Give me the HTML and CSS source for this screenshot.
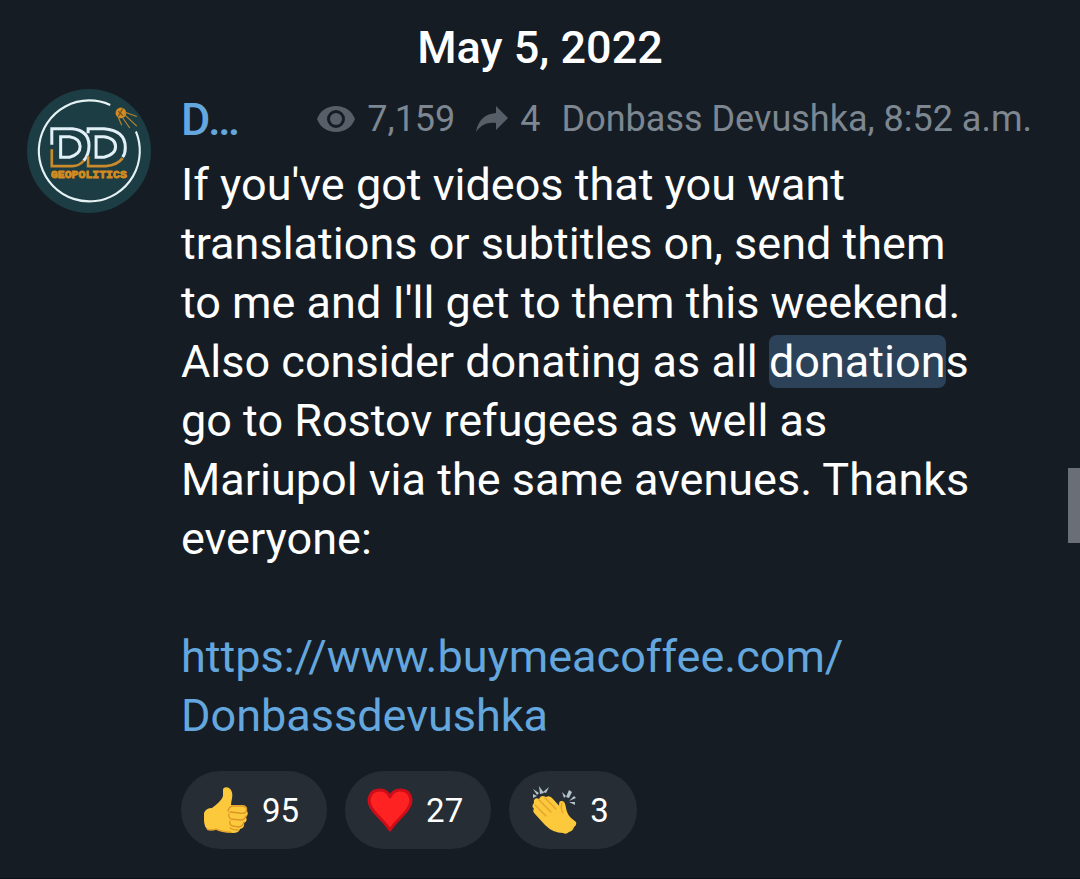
FILE: index.html
```html
<!DOCTYPE html>
<html lang="en">
<head>
    <meta charset="UTF-8">
    <meta name="viewport" content="width=device-width, initial-scale=1.0">
    <title>Donbass Devushka</title>
    <link rel="stylesheet" href="styles.css">
</head>
<body>
<main class="chat">
    <h2 class="date">May 5, 2022</h2>

    <article class="message">
        <svg class="avatar" viewBox="0 0 140 140" role="img" aria-label="DD Geopolitics">
            <circle cx="70" cy="70" r="70" fill="#1b3d43"/>
            <path d="M94 18A57 57 0 1 0 123 48" fill="none" stroke="#e6f1f4" stroke-width="2.4"/>
            <!-- letters frame -->
            <g fill="none" stroke="#e2f0f8" stroke-width="3.4">
                <path d="M28 63V45H51Q70 47 70 64Q70 74 64 81"/>
                <path d="M38 54H48Q60 56 60 65T48 77H38Z"/>
                <path d="M69 50V45H87Q111 47 111 66Q111 73 108 77"/>
                <path d="M78 54H87Q100 56 100 65T87 77H78Z"/>
            </g>
            <path d="M28 68V87H51Q59 87 64 81M69 76V87H89Q102 86 108 78" fill="none" stroke="#c98b2b" stroke-width="3"/>
            <text class="avatar-text" x="27" y="101">GEOPOLITICS</text>
            <!-- satellite -->
            <circle cx="106" cy="27" r="6" fill="#d58b20"/>
            <path d="M103 25L108 30M108 22L103 31" stroke="#6f5528" stroke-width="1.5"/>
            <path d="M110 26L124 31M110 29L124 42M107 31L116 44M103 32L107 41" stroke="#b8862f" stroke-width="1.3"/>
        </svg>

        <div class="content">
            <header class="info">
                <a class="author" href="#">D…</a>
                <div class="meta">
                    <span class="stat">
                        <svg class="icon-eye" viewBox="0 0 38 26" aria-hidden="true">
                            <path fill-rule="evenodd" d="M19 0C10 0 3 5 0 13C3 21 10 26 19 26S35 21 38 13C35 5 28 0 19 0ZM19 4A9 9 0 1 1 19 22A9 9 0 1 1 19 4Z"/>
                            <circle cx="19" cy="13" r="6"/>
                        </svg>
                        7,159
                    </span>
                    <span class="stat">
                        <svg class="icon-share" viewBox="0 0 32 26" aria-hidden="true">
                            <path d="M20 0L32 12L20 24V17C11 16 5 19 0 26C2 15 8 8 20 7Z"/>
                        </svg>
                        4
                    </span>
                    <span class="signature">Donbass Devushka, 8:52 a.m.</span>
                </div>
            </header>

            <p class="text">If you've got videos that you want translations or subtitles on, send them to me and I'll get to them this weekend. Also consider donating as all <mark>donation</mark>s go to Rostov refugees as well as Mariupol via the same avenues. Thanks everyone:</p>
            <p class="text"><a href="https://www.buymeacoffee.com/Donbassdevushka">https://www.buymeacoffee.com/<wbr>Donbassdevushka</a></p>

            <div class="reactions">
                <button class="reaction" type="button" aria-label="Thumbs up 95">
                    <svg class="emoji" viewBox="0 0 46 48" aria-hidden="true">
                        <path fill="#fdc93c" d="M20 4C20 1 25 0 28 4C31 9 28 15 28 19H40Q45 20 44 25Q46 28 43 31Q45 35 41 37Q42 42 37 43Q36 47 30 47L17 45L12 43L5 44Q1 41 1 34V27Q3 22 9 22C13 19 19 14 20 10Z"/>
                        <path fill="none" stroke="#dc9628" stroke-width="1.3" stroke-linecap="round" d="M25 25Q26 20 31 20H40Q45 21 43 26Q41 28 36 27L27 26M26 28Q25 31 28 33L37 34Q42 34 43 30M27 35Q26 38 29 40L36 41Q40 40 41 36M27 42Q30 44 35 44"/>
                        <path fill="none" stroke="#e9a82c" stroke-width="1.6" d="M4 43Q8 45 13 43Q19 46 28 46"/>
                    </svg>
                    95
                </button>
                <button class="reaction" type="button" aria-label="Heart 27">
                    <svg class="emoji" viewBox="0 0 46 48" aria-hidden="true">
                        <path fill="#ff2222" stroke="#cf0d19" stroke-width="3" stroke-linejoin="round" d="M23 44Q19 38 11 30Q2 21 2 14Q3 4 13 4Q20 4 23 11Q26 4 33 4Q43 4 44 14Q44 21 35 30Q27 38 23 44Z"/>
                    </svg>
                    27
                </button>
                <button class="reaction" type="button" aria-label="Clapping hands 3">
                    <svg class="emoji" viewBox="0 0 46 48" aria-hidden="true">
                        <path fill="#b3c3cc" d="M2 3L8 7L6 9ZM8 0L13 7L9 8ZM18 1L15 7L12 6ZM2 8L6 10L2 12ZM31 6L35 10L33 12ZM38 4L41 6L38 12L35 11ZM43 10L45 12L38 15ZM38 16L44 16L44 19Z"/>
                        <path fill="#f0a725" d="M28 26Q26 19 30 15Q34 15 34 21L36 29L43 35L38 41L26 34Z"/>
                        <path fill="#fdc93c" d="M3 17C2 13 5 11 8 13Q10 8 15 11Q19 9 22 13L30 22Q26 15 31 15Q34 15 35 22Q36 28 40 32L45 36Q46 39 43 41Q42 45 38 46Q35 49 32 47Q22 47 14 39L4 28Q1 25 3 23Q0 20 3 17Z"/>
                        <path fill="none" stroke="#e3a02c" stroke-width="1.2" stroke-linecap="round" d="M8 14L20 26M14 12L25 23M4 19L15 30M31 17Q29 22 32 27"/>
                    </svg>
                    3
                </button>
            </div>
        </div>
    </article>
    <div class="scroll-thumb"></div>
</main>
</body>
</html>
```

FILE: styles.css
```css
* {
    box-sizing: border-box;
}
body {
    margin: 0;
    background-color: #151c24;
    color: #fff;
    font-family: Roboto, sans-serif;
    font-size: 45px;
    line-height: 59px;
}
a {
    color: #64a7de;
    text-decoration: none;
}
.chat {
    position: relative;
    padding: 18px 48px 29px 27px;
    border-bottom: 1px solid #0c1118;
}
.date {
    /* center on the whole window, the side paddings differ */
    margin: 0 0 11px 21px;
    font-size: 45px;
    font-weight: 500;
    line-height: 60px;
    text-align: center;
}
.message {
    display: flex;
    align-items: flex-start;
    gap: 30px;
}
.avatar {
    flex: none;
    width: 124px;
    height: 124px;
}
.avatar-text {
    fill: #d58b20;
    stroke: #d58b20;
    stroke-width: 1px;
    font-family: "Liberation Mono", monospace;
    font-size: 13px;
    font-weight: bold;
}
.content {
    flex: 1;
    min-width: 0;
}
.info {
    display: flex;
    justify-content: space-between;
    align-items: center;
    height: 60px;
    margin-bottom: 6px;
}
.author {
    font-weight: 500;
}
.meta {
    display: flex;
    align-items: center;
    gap: 21px;
    color: #7d8791;
    font-size: 36px;
    white-space: nowrap;
}
.stat {
    display: flex;
    align-items: center;
    gap: 12px;
}
.icon-eye,
.icon-share {
    fill: #565e68;
}
.icon-eye {
    width: 38px;
    height: 26px;
}
.icon-share {
    width: 32px;
    height: 26px;
}
.text {
    max-width: 800px;
    margin: 0 0 59px;
}
.text mark {
    border-radius: 8px;
    background-color: #2b4259;
    color: inherit;
}
.text + .text {
    margin-bottom: 26px;
}
.reactions {
    display: flex;
    gap: 18px;
}
.reaction {
    display: flex;
    align-items: center;
    gap: 13px;
    height: 78px;
    padding: 0 28px 0 22px;
    border: none;
    border-radius: 39px;
    background-color: #262d35;
    color: #fff;
    font-family: inherit;
    font-size: 33px;
    cursor: pointer;
}
.emoji {
    width: 46px;
    height: 48px;
}
.scroll-thumb {
    position: absolute;
    top: 468px;
    right: 0;
    width: 12px;
    height: 75px;
    background-color: #6a6e76;
}
```
